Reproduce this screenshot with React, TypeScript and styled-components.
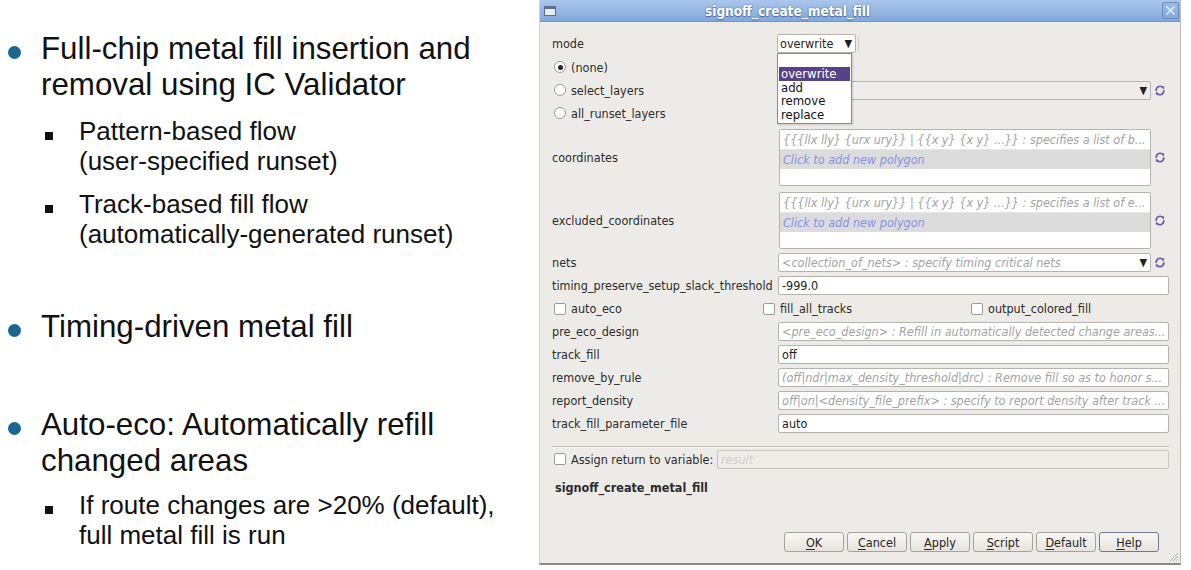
import React from 'react';
import styled, { createGlobalStyle } from 'styled-components';

const GlobalStyle = createGlobalStyle`
  html, body { margin: 0; padding: 0; background: #ffffff; }
  body { width: 1191px; height: 570px; overflow: hidden; }
`;

const Page = styled.div`
  display: flex;
  width: 1191px;
  height: 570px;
`;

/* ---------- slide text ---------- */
const Slide = styled.div`
  width: 539px;
  flex: none;
  box-sizing: border-box;
  padding-top: 31px;
  font-family: "Liberation Sans", Arial, sans-serif;
  color: #111;
`;

const MainItem = styled.div<{ $top: number }>`
  display: flex;
  align-items: flex-start;
  padding-left: 8px;
  margin-top: ${p => p.$top}px;
  font-size: 31.3px;
  line-height: 36px;
`;

const Dot = styled.span`
  flex: none;
  width: 13px;
  height: 13px;
  border-radius: 50%;
  background: #1b6691;
  margin-top: 15px;
  margin-right: 20px;
`;

const SubItem = styled.div<{ $top: number }>`
  display: flex;
  align-items: flex-start;
  padding-left: 45px;
  margin-top: ${p => p.$top}px;
  font-size: 26px;
  line-height: 30px;
`;

const Square = styled.span`
  flex: none;
  width: 8px;
  height: 8px;
  background: #111;
  margin-top: 16px;
  margin-right: 26px;
`;

/* ---------- dialog ---------- */
const Dialog = styled.div`
  position: relative;
  width: 642px;
  height: 565px;
  flex: none;
  box-sizing: border-box;
  display: flex;
  flex-direction: column;
  background: #edebe7;
  border-right: 1px solid #bdb9b3;
  border-left: 1px solid #d6d3ce;
  border-bottom: 2px solid #8e8a85;
  font-family: "DejaVu Sans Condensed", "DejaVu Sans", sans-serif;
  font-stretch: condensed;
  font-size: 12.5px;
  color: #2c2c2c;
`;

const TitleBar = styled.div`
  height: 22px;
  flex: none;
  display: flex;
  align-items: center;
  padding: 0 1px 0 4px;
  background: linear-gradient(#aac6ec, #83a8dc);
  border-bottom: 1px solid #7396cb;
  box-sizing: border-box;
`;

const WinIcon = styled.span`
  width: 12px;
  height: 10px;
  box-sizing: border-box;
  border: 1px solid #5d6f8c;
  border-top-width: 3px;
  background: #e9ecef;
`;

const Title = styled.span`
  margin-left: 149px;
  flex: 1;
  font-weight: bold;
  font-size: 13.5px;
  color: #ffffff;
  text-shadow: 0 0 2px #4d6b9a, 0 1px 1px #4d6b9a;
`;

const CloseBtn = styled.span`
  width: 17px;
  height: 17px;
  box-sizing: border-box;
  border: 1px solid #6a8cc2;
  border-radius: 2px;
  background: linear-gradient(#9ab9e6, #86a9dc);
  display: flex;
  align-items: center;
  justify-content: center;
`;

const Content = styled.div`
  flex: 1;
  display: flex;
  flex-direction: column;
  padding: 10px 11px 12px 12px;
`;

const FormRow = styled.div<{ $h: number }>`
  height: ${p => p.$h}px;
  flex: none;
  display: grid;
  grid-template-columns: 226px 1fr;
  align-items: center;
`;

const Label = styled.span`
  white-space: nowrap;
`;

const ChoiceLabel = styled.span`
  display: flex;
  align-items: center;
  gap: 5px;
  padding-left: 2px;
  white-space: nowrap;
`;

const Radio = styled.span<{ $on?: boolean }>`
  width: 12px;
  height: 12px;
  box-sizing: border-box;
  border-radius: 50%;
  border: 1px solid #9d9993;
  background: #ffffff;
  display: flex;
  align-items: center;
  justify-content: center;
  &::after {
    content: '';
    width: 5px;
    height: 5px;
    border-radius: 50%;
    background: ${p => (p.$on ? '#262626' : 'transparent')};
  }
`;

const Check = styled.span`
  width: 12px;
  height: 12px;
  flex: none;
  box-sizing: border-box;
  border-radius: 2px;
  border: 1px solid #9d9993;
  background: #ffffff;
`;

const Field = styled.div<{ $ph?: boolean; $disabled?: boolean }>`
  height: 19px;
  box-sizing: border-box;
  border: 1px solid #b6b2ac;
  border-radius: 2px;
  background: ${p => (p.$disabled ? '#efedea' : '#ffffff')};
  padding: 0 3px;
  display: flex;
  align-items: center;
  overflow: hidden;
  white-space: nowrap;
  font-style: ${p => (p.$ph ? 'italic' : 'normal')};
  color: ${p => (p.$ph ? '#a3a3a3' : '#222')};
  min-width: 0;
`;

const ComboText = styled.span`
  flex: 1;
  overflow: hidden;
`;

const Arrow = styled.span`
  font-style: normal;
  color: #222;
  font-size: 11px;
  margin-left: 4px;
`;

const WithIcon = styled.div`
  display: flex;
  align-items: center;
  min-width: 0;
`;

const Grow = styled.div`
  flex: 1;
  min-width: 0;
`;

const IconSlot = styled.span`
  width: 18px;
  flex: none;
  display: flex;
  justify-content: center;
  align-items: center;
`;

const ModeWrap = styled.div`
  position: relative;
  display: flex;
  align-items: center;
  gap: 2px;
  margin-left: -1px;
`;

const ModeCombo = styled(Field)`
  width: 79px;
  justify-content: space-between;
  padding: 0 3px 0 2px;
`;

const ModeTick = styled.span`
  width: 1px;
  height: 16px;
  background: #cfcbc5;
`;

const Popup = styled.div`
  position: absolute;
  left: 0;
  top: 19px;
  width: 75px;
  box-sizing: border-box;
  border: 1px solid #8d8a85;
  background: #ffffff;
  padding: 13px 1px 2px 1px;
  z-index: 5;
  box-shadow: 1px 1px 2px rgba(0, 0, 0, 0.15);
`;

const PopupItem = styled.div<{ $sel?: boolean }>`
  height: 13.5px;
  line-height: 13.5px;
  padding-left: 2px;
  font-size: 13px;
  background: ${p => (p.$sel ? '#574285' : 'transparent')};
  color: ${p => (p.$sel ? '#ffffff' : '#111')};
`;

const ListBox = styled.div`
  height: 57px;
  box-sizing: border-box;
  border: 1px solid #b6b2ac;
  border-radius: 2px;
  background: #ffffff;
  display: flex;
  flex-direction: column;
  overflow: hidden;
  margin-left: 1px;
`;

const ListRow = styled.div<{ $gray?: boolean; $blue?: boolean }>`
  height: 19px;
  flex: none;
  display: flex;
  align-items: center;
  padding: 0 3px;
  white-space: nowrap;
  overflow: hidden;
  font-style: italic;
  background: ${p => (p.$gray ? '#dcdcdc' : '#ffffff')};
  color: ${p => (p.$blue ? '#7f95e6' : '#a3a3a3')};
  border-bottom: ${p => (p.$gray ? 'none' : '1px solid #e6e6e6')};
`;

const CheckRow = styled.div`
  height: 23px;
  flex: none;
  display: grid;
  grid-template-columns: 209px 208px 1fr;
  align-items: center;
`;

const SepSlot = styled.div`
  height: 13px;
  flex: none;
  display: flex;
  align-items: flex-end;
`;

const Separator = styled.div`
  width: 100%;
  height: 0;
  border-top: 1px solid #c3bfb9;
  border-bottom: 1px solid #fbfaf9;
`;

const AssignRow = styled.div`
  height: 20px;
  flex: none;
  display: flex;
  align-items: center;
  margin-top: 1px;
`;

const AssignLabel = styled(ChoiceLabel)`
  width: 165px;
  flex: none;
  box-sizing: border-box;
`;

const AssignField = styled(Field)`
  flex: 1;
  color: #cfcdc9;
  background: #efedea;
  border-color: #c9c5bf;
`;

const CommandName = styled.div`
  height: 36px;
  flex: none;
  display: flex;
  align-items: center;
  padding-left: 3px;
  font-weight: bold;
`;

const Spacer = styled.div`
  flex: 1;
`;

const ButtonRow = styled.div`
  display: flex;
  justify-content: flex-end;
  gap: 3px;
  padding-right: 10px;
  margin-bottom: -1px;
`;

const Btn = styled.button<{ $focus?: boolean }>`
  width: 60px;
  height: 20px;
  box-sizing: border-box;
  padding: 0;
  border: 1px solid ${p => (p.$focus ? '#6f7890' : '#a5a19b')};
  border-radius: 3px;
  background: linear-gradient(#f8f7f5, #e7e4df);
  font-family: inherit;
  font-stretch: condensed;
  font-size: 12.5px;
  color: #262626;
  u { text-decoration: underline; text-underline-offset: 2px; }
`;

const Grip = styled.svg`
  position: absolute;
  right: 1px;
  bottom: 1px;
`;

const Refresh: React.FC = () => (
  <svg width="12" height="13" viewBox="0 0 12 13" fill="none">
    <path d="M2.2 6.2 A3.9 3.9 0 0 1 9 3.6" stroke="#6a58b0" strokeWidth="1.7" strokeLinecap="round" />
    <path d="M7.2 2.6 L10.3 2.6 L9.9 5.6 Z" fill="#6a58b0" />
    <path d="M9.8 6.8 A3.9 3.9 0 0 1 3 9.4" stroke="#6a58b0" strokeWidth="1.7" strokeLinecap="round" />
    <path d="M4.8 10.4 L1.7 10.4 L2.1 7.4 Z" fill="#6a58b0" />
  </svg>
);

const Bullet: React.FC<{ top: number; children: React.ReactNode }> = ({ top, children }) => (
  <MainItem $top={top}>
    <Dot />
    <span>{children}</span>
  </MainItem>
);

const Sub: React.FC<{ top: number; children: React.ReactNode }> = ({ top, children }) => (
  <SubItem $top={top}>
    <Square />
    <span>{children}</span>
  </SubItem>
);

const TextRow: React.FC<{ label: string; value: string; ph?: boolean }> = ({ label, value, ph }) => (
  <FormRow $h={23}>
    <Label>{label}</Label>
    <Field $ph={ph}>{value}</Field>
  </FormRow>
);

export default function App() {
  return (
    <>
      <GlobalStyle />
      <Page>
        <Slide>
          <Bullet top={0}>
            Full-chip metal fill insertion and
            <br />
            removal using IC Validator
          </Bullet>
          <Sub top={13}>
            Pattern-based flow
            <br />
            (user-specified runset)
          </Sub>
          <Sub top={13}>
            Track-based fill flow
            <br />
            (automatically-generated runset)
          </Sub>
          <Bullet top={60}>Timing-driven metal fill</Bullet>
          <Bullet top={62}>
            Auto-eco: Automatically refill
            <br />
            changed areas
          </Bullet>
          <Sub top={11}>
            If route changes are &gt;20% (default),
            <br />
            full metal fill is run
          </Sub>
        </Slide>

        <Dialog>
          <TitleBar>
            <WinIcon />
            <Title>signoff_create_metal_fill</Title>
            <CloseBtn>
              <svg width="11" height="11" viewBox="0 0 11 11">
                <path d="M1.5 1.5 L9.5 9.5 M9.5 1.5 L1.5 9.5" stroke="#eef3fb" strokeWidth="1.4" />
              </svg>
            </CloseBtn>
          </TitleBar>

          <Content>
            <FormRow $h={23}>
              <Label>mode</Label>
              <ModeWrap>
                <ModeCombo>
                  <span>overwrite</span>
                  <Arrow>▼</Arrow>
                </ModeCombo>
                <ModeTick />
                <Popup>
                  <PopupItem $sel>overwrite</PopupItem>
                  <PopupItem>add</PopupItem>
                  <PopupItem>remove</PopupItem>
                  <PopupItem>replace</PopupItem>
                </Popup>
              </ModeWrap>
            </FormRow>

            <FormRow $h={24}>
              <ChoiceLabel>
                <Radio $on />
                (none)
              </ChoiceLabel>
            </FormRow>

            <FormRow $h={22}>
              <ChoiceLabel>
                <Radio />
                select_layers
              </ChoiceLabel>
              <WithIcon>
                <Grow>
                  <Field $disabled>
                    <ComboText />
                    <Arrow>▼</Arrow>
                  </Field>
                </Grow>
                <IconSlot>
                  <Refresh />
                </IconSlot>
              </WithIcon>
            </FormRow>

            <FormRow $h={24}>
              <ChoiceLabel>
                <Radio />
                all_runset_layers
              </ChoiceLabel>
            </FormRow>

            <FormRow $h={65}>
              <Label>coordinates</Label>
              <WithIcon>
                <Grow>
                  <ListBox>
                    <ListRow>{'{{{llx lly} {urx ury}} | {{x y} {x y} ...}} : specifies a list of b...'}</ListRow>
                    <ListRow $gray $blue>Click to add new polygon</ListRow>
                  </ListBox>
                </Grow>
                <IconSlot>
                  <Refresh />
                </IconSlot>
              </WithIcon>
            </FormRow>

            <FormRow $h={61}>
              <Label>excluded_coordinates</Label>
              <WithIcon>
                <Grow>
                  <ListBox>
                    <ListRow>{'{{{llx lly} {urx ury}} | {{x y} {x y} ...}} : specifies a list of e...'}</ListRow>
                    <ListRow $gray $blue>Click to add new polygon</ListRow>
                  </ListBox>
                </Grow>
                <IconSlot>
                  <Refresh />
                </IconSlot>
              </WithIcon>
            </FormRow>

            <FormRow $h={23}>
              <Label>nets</Label>
              <WithIcon>
                <Grow>
                  <Field $ph>
                    <ComboText>{'<collection_of_nets> : specify timing critical nets'}</ComboText>
                    <Arrow>▼</Arrow>
                  </Field>
                </Grow>
                <IconSlot>
                  <Refresh />
                </IconSlot>
              </WithIcon>
            </FormRow>

            <TextRow label="timing_preserve_setup_slack_threshold" value="-999.0" />

            <CheckRow>
              <ChoiceLabel>
                <Check />
                auto_eco
              </ChoiceLabel>
              <ChoiceLabel>
                <Check />
                fill_all_tracks
              </ChoiceLabel>
              <ChoiceLabel>
                <Check />
                output_colored_fill
              </ChoiceLabel>
            </CheckRow>

            <TextRow
              label="pre_eco_design"
              value="<pre_eco_design> : Refill in automatically detected change areas..."
              ph
            />
            <TextRow label="track_fill" value="off" />
            <TextRow
              label="remove_by_rule"
              value="(off|ndr|max_density_threshold|drc) : Remove fill so as to honor s..."
              ph
            />
            <TextRow
              label="report_density"
              value="off|on|<density_file_prefix> : specify to report density after track ..."
              ph
            />
            <TextRow label="track_fill_parameter_file" value="auto" />

            <SepSlot>
              <Separator />
            </SepSlot>

            <AssignRow>
              <AssignLabel>
                <Check />
                Assign return to variable:
              </AssignLabel>
              <AssignField $ph>result</AssignField>
            </AssignRow>

            <CommandName>signoff_create_metal_fill</CommandName>

            <Spacer />

            <ButtonRow>
              <Btn><u>O</u>K</Btn>
              <Btn><u>C</u>ancel</Btn>
              <Btn><u>A</u>pply</Btn>
              <Btn><u>S</u>cript</Btn>
              <Btn><u>D</u>efault</Btn>
              <Btn $focus><u>H</u>elp</Btn>
            </ButtonRow>
          </Content>

          <Grip width="12" height="12" viewBox="0 0 12 12">
            <path d="M11 3 L3 11 M11 6 L6 11 M11 9 L9 11" stroke="#b2aea8" strokeWidth="1" />
          </Grip>
        </Dialog>
      </Page>
    </>
  );
}
